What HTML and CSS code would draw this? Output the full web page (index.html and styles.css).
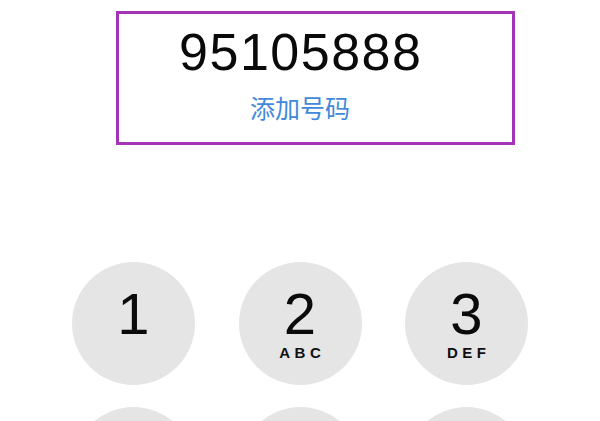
FILE: index.html
```html
<!DOCTYPE html>
<html lang="zh">
<head>
<meta charset="utf-8">
<link rel="stylesheet" href="styles.css">
</head>
<body>
<div class="screen">
  <div class="entry">
    <div class="number">95105888</div>
    <div class="add">添加号码</div>
  </div>
  <div class="keypad">
    <div class="key"><span class="digit">1</span></div>
    <div class="key"><span class="digit">2</span><span class="letters">ABC</span></div>
    <div class="key"><span class="digit">3</span><span class="letters">DEF</span></div>
    <div class="key"></div>
    <div class="key"></div>
    <div class="key"></div>
  </div>
</div>
</body>
</html>
```
FILE: styles.css
```css
html, body {
  margin: 0;
  padding: 0;
  background: #ffffff;
}
body {
  width: 600px;
  height: 421px;
  overflow: hidden;
  font-family: "Liberation Sans", Arial, sans-serif;
}
.screen {
  display: flex;
  flex-direction: column;
  padding-top: 11px;
}
.entry {
  box-sizing: border-box;
  margin-left: 116px;
  width: 399px;
  height: 134px;
  border: 3px solid #a334b5;
  padding: 8px 31px 0 0;
  display: flex;
  flex-direction: column;
  align-items: center;
}
.number {
  font-size: 52px;
  line-height: 60px;
  letter-spacing: 1.5px;
  color: #0a0a0a;
  margin-right: -1.5px;
}
.add {
  margin-top: 10px;
  font-family: "Noto Sans CJK SC", sans-serif;
  font-size: 25px;
  line-height: 30px;
  color: #4289d9;
}
.keypad {
  margin-top: 117px;
  display: grid;
  grid-template-columns: repeat(3, 123px);
  column-gap: 43.5px;
  row-gap: 22px;
  justify-content: center;
}
.key {
  width: 123px;
  height: 123px;
  border-radius: 50%;
  background: #e5e5e5;
  display: flex;
  flex-direction: column;
  align-items: center;
  box-sizing: border-box;
  padding-top: 23px;
}
.digit {
  font-size: 58px;
  line-height: 58px;
  color: #0a0a0a;
}
.letters {
  margin-top: 2px;
  font-size: 15px;
  line-height: 15px;
  font-weight: bold;
  letter-spacing: 4.5px;
  margin-right: -4.5px;
  color: #111111;
}
```
